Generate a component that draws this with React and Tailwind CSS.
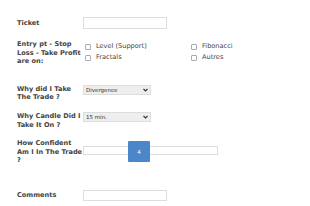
import React from 'react'

const label = "w-[66px] shrink-0 text-[6.6px] leading-[8.6px] font-bold text-[#444]"

function Check({ text }) {
  return (
    <div className="flex items-center h-[11px]">
      <span className="w-[6px] h-[6px] border border-[#aaa] bg-white rounded-[1px] mr-[5px]" />
      <span className="text-[6.6px] text-[#444]">{text}</span>
    </div>
  )
}

function Select({ value }) {
  return (
    <div className="w-[68px] h-[10px] border border-[#ddd] bg-[#eee] flex items-center justify-between px-[2px]">
      <span className="text-[5.5px] text-[#333]">{value}</span>
      <svg width="5" height="4" viewBox="0 0 5 4"><path d="M0.5 1 L2.5 3 L4.5 1" stroke="#333" strokeWidth="1.1" fill="none" /></svg>
    </div>
  )
}

export default function App() {
  return (
    <div className="w-[310px] h-[206px] bg-white pl-[17px] pt-[17px] font-['DejaVu_Sans',Verdana,sans-serif]">
      <div className="flex items-center h-[12px]">
        <div className={label}>Ticket</div>
        <div className="w-[84px] h-[12px] border border-[#ddd] bg-white" />
      </div>

      <div className="flex mt-[11px]">
        <div className={label}>Entry pt - Stop Loss - Take Profit are on:</div>
        <div className="flex pt-[1px]">
          <div className="w-[108px] pl-[2px]">
            <Check text="Level (Support)" />
            <Check text="Fractals" />
          </div>
          <div>
            <Check text="Fibonacci" />
            <Check text="Autres" />
          </div>
        </div>
      </div>

      <div className="flex mt-[19px]">
        <div className={label}>Why did I Take The Trade ?</div>
        <Select value="Divergence" />
      </div>

      <div className="flex mt-[10px]">
        <div className={label}>Why Candle Did I Take It On ?</div>
        <Select value="15 min." />
      </div>

      <div className="flex mt-[10px]">
        <div className={label}>How Confident Am I In The Trade ?</div>
        <div className="relative w-[135px] h-[9px] border border-[#ddd] bg-white mt-[7px]">
          <div className="absolute left-[44px] top-[-6px] w-[22px] h-[21px] bg-[#4a86c8] rounded-[1px] flex items-center justify-center text-white text-[5.5px]">4</div>
        </div>
      </div>

      <div className="flex items-center mt-[25px] h-[11px]">
        <div className={label}>Comments</div>
        <div className="w-[84px] h-[11px] border border-[#ddd] bg-white" />
      </div>
    </div>
  )
}
